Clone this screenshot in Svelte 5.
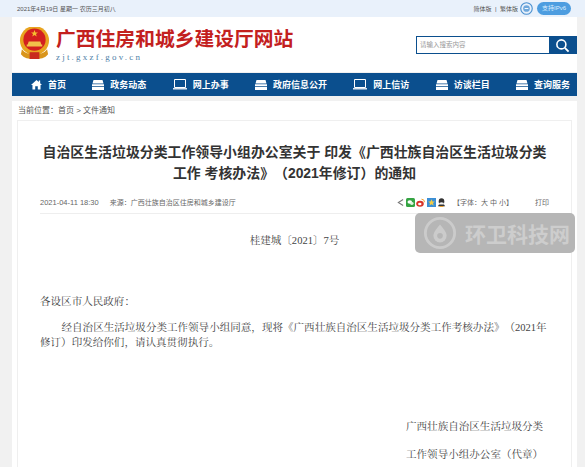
<script>
  const nav = [
    { t: '首页', i: 'home' }, { t: '政务动态', i: 'box' }, { t: '网上办事', i: 'pc' },
    { t: '政府信息公开', i: 'box' }, { t: '网上信访', i: 'pc' }, { t: '访谈栏目', i: 'box' }, { t: '查询服务', i: 'box' }
  ];
</script>

<div class="page">
  <div class="topbar">
    <div class="bar-in">
      <span class="date">2021年4月19日 星期一 农历三月初八</span>
      <span class="right">
        <span>简体版</span><span class="sep">|</span><span>繁体版</span>
        <svg class="care" viewBox="0 0 14 14" width="13" height="13"><circle cx="7" cy="7" r="6.2" fill="none" stroke="#4a90d0" stroke-width="1.2"/><circle cx="7" cy="7" r="3.6" fill="#6fa8dc"/><path d="M5 7h4" stroke="#fff"/></svg>
        <span class="ipv6">支持IPv6</span>
      </span>
    </div>
  </div>

  <div class="wrap">
    <header class="head">
      <div class="brand">
        <svg class="emblem" viewBox="0 0 32 34" width="31" height="33">
          <circle cx="16" cy="14" r="15" fill="#e8a420"/>
          <circle cx="16" cy="13" r="11.5" fill="#d3201f"/>
          <path d="M16 3l1 2.600h2.600l-2.100 1.600.8 2.600-2.300-1.600-2.300 1.600.8-2.600-2.100-1.600H15z" fill="#f5c030"/>
          <path d="M8 18h16v2H8zM10 15h12l1 3H9z" fill="#f2c14a"/>
          <path d="M3 23c3 4 7 5 13 5s10-1 13-5l1 5c-3 4-8 5-14 5S5 32 2 28z" fill="#d9951c"/>
          <rect x="11" y="26" width="10" height="7" fill="#c92a1e"/>
        </svg>
        <div>
          <div class="title">广西住房和城乡建设厅网站</div>
          <div class="domain">zjt.gxzf.gov.cn</div>
        </div>
      </div>
      <div class="search">
        <span class="ph">请输入搜索内容</span>
        <span class="btn"><svg viewBox="0 0 16 16" width="15" height="15"><circle cx="6.800" cy="6.800" r="4.800" fill="none" stroke="#fff" stroke-width="1.700"/><path d="M10.500 10.500l4 4" stroke="#fff" stroke-width="2"/></svg></span>
      </div>
    </header>

    <nav class="nav">
      {#each nav as n}
        <span class="nav-item">
          {#if n.i === 'home'}
            <svg viewBox="0 0 12 12" width="11" height="11"><path d="M6 1L0 6.500h1.600V11.500h3V8h2.800v3.500h3v-5H12L10 4.700V1.500H8.500v1.800z" fill="#fff"/></svg>
          {:else if n.i === 'box'}
            <svg viewBox="0 0 12 10" width="12" height="10"><path d="M1.500 0h9l1 3.500H.5zM0 4.300h12V6H0zM0 6.800h12V10H0z" fill="#fff"/></svg>
          {:else}
            <svg viewBox="0 0 14 11" width="14" height="11"><path d="M1.500.5h11v8h-11z" fill="none" stroke="#fff"/><path d="M0 9.800h14" stroke="#fff" stroke-width="1.300"/></svg>
          {/if}
          <b>{n.t}</b>
        </span>
      {/each}
    </nav>

    <div class="crumb">当前位置：首页 &gt; 文件通知</div>

    <div class="shell">
      <main class="article">
        <h1>自治区生活垃圾分类工作领导小组办公室关于 印发《广西壮族自治区生活垃圾分类<br />工作 考核办法》（2021年修订）的通知</h1>
        <div class="meta">
          <span class="m-left"><span class="time">2021-04-11 18:30</span><span>来源：广西壮族自治区住房和城乡建设厅</span></span>
          <span class="m-right">
            <span class="share">
              <svg viewBox="0 0 8 9" width="7" height="9"><path d="M7 1L1.500 4.500 7 8" fill="none" stroke="#777" stroke-width="1.200"/></svg>
              <svg viewBox="0 0 9 9" width="9" height="9"><rect width="9" height="9" rx="1.500" fill="#35a443"/><ellipse cx="3.800" cy="4" rx="2.300" ry="1.800" fill="#fff"/><ellipse cx="5.800" cy="5.500" rx="1.800" ry="1.400" fill="#dff3e0"/></svg>
              <svg viewBox="0 0 9 9" width="9" height="9"><ellipse cx="4" cy="5.800" rx="3.800" ry="3" fill="#d8352a"/><ellipse cx="3.800" cy="6" rx="1.700" ry="1.300" fill="#fff"/><path d="M5.500 1.200a3 3 0 0 1 3 3" fill="none" stroke="#f0a030"/></svg>
              <svg viewBox="0 0 9 9" width="9" height="9"><rect width="9" height="9" fill="#3b8fd6"/><path d="M4.500 1.200l1 2.200 2.300.2-1.800 1.500.6 2.400-2.100-1.300-2.100 1.300.6-2.400L1.200 3.600l2.300-.2z" fill="#f3cb45"/></svg>
              <svg viewBox="0 0 9 9" width="9" height="9"><ellipse cx="4.500" cy="3.500" rx="2.800" ry="3.300" fill="#333"/><ellipse cx="4.500" cy="6" rx="2.600" ry="1.800" fill="#f2f2f2"/><path d="M2 6.500L.8 8.200h7.400L7 6.500" fill="#333"/><path d="M2.500 8h4v1h-4z" fill="#e8a030"/></svg>
            </span>
            <span class="font">【字体：大 中 小】</span>
            <span class="print">打印</span>
          </span>
        </div>
        <div class="body">
          <p class="center">桂建城〔2021〕7号</p>
          <p class="addr">各设区市人民政府：</p>
          <p class="para">经自治区生活垃圾分类工作领导小组同意，现将《广西壮族自治区生活垃圾分类工作考核办法》（2021年修订）印发给你们，请认真贯彻执行。</p>
          <p class="sign s1">广西壮族自治区生活垃圾分类</p>
          <p class="sign s2">工作领导小组办公室（代章）</p>
        </div>
      </main>
      <div class="mark">
        <svg viewBox="0 0 36 36" width="34" height="34"><circle cx="18" cy="18" r="15.500" fill="none" stroke="#cbcbcb" stroke-width="3"/><path d="M18 9c5 6 7 9 7 12a7 7 0 0 1-14 0c0-3 2-6 7-12z" fill="#cbcbcb"/><circle cx="18" cy="21" r="3" fill="#b6b6b6"/></svg>
        <span>环卫科技网</span>
      </div>
    </div>
  </div>
</div>

<style>
  :global(body) { margin: 0; background: #f1f1f1; overflow: hidden; }
  .page { height: 467px; overflow: hidden; font-family: "Liberation Sans", "Noto Sans CJK SC", sans-serif; color: #333; text-spacing-trim: space-all; }
  .wrap { width: 565px; margin-left: 12px; }
  .topbar { height: 17px; background: #e9f1fb; }
  .bar-in { display: flex; justify-content: space-between; align-items: center; height: 17px; font-size: 6px; color: #555; margin-left: 17px; width: 554px; }
  .right { display: flex; align-items: center; gap: 3px; }
  .sep { margin: 0 .5px; }
  .care { margin-left: -1px; }
  .ipv6 { background: #4d9de0; color: #dfefff; border-radius: 7px; width: 34px; height: 13px; line-height: 13px; text-align: center; margin-left: 1px; }
  .head { height: 55px; background: #fff; display: flex; justify-content: space-between; align-items: flex-start; }
  .brand { display: flex; gap: 6px; padding: 10px 0 0 7px; }
  .title { font-size: 19.800px; line-height: 24px; font-weight: 700; color: #c3201e; white-space: nowrap; }
  .domain { font-family: "Liberation Serif", serif; font-size: 9px; letter-spacing: 2.200px; color: #4f7fa8; line-height: 11px; margin-top: 1px; }
  .search { display: flex; width: 161px; height: 18px; margin-top: 19px; border: 1px solid #0b4f8e; box-sizing: border-box; background: #fff; }
  .ph { flex: 1; font-size: 6.500px; color: #999; line-height: 16px; padding-left: 3px; }
  .btn { width: 27px; background: #0b4f8e; display: flex; align-items: center; justify-content: center; }
  .nav { height: 23px; margin-top: 1px; background: #0b4f8e; display: flex; justify-content: space-between; align-items: center; padding: 0 7px 0 19px; }
  .nav-item { display: flex; align-items: center; gap: 6px; color: #fff; font-size: 9px; white-space: nowrap; }
  .nav-item b { font-weight: 700; }
  .crumb { margin-top: 5px; height: 19px; background: #fff; font-size: 8px; line-height: 19px; color: #555; padding-left: 6px; box-sizing: border-box; }
  .shell { position: relative; background: #fff; height: 348px; padding: 0 5px; box-sizing: border-box; }
  .article { height: 348px; border: 1px solid #efefef; border-bottom: 0; padding: 21px 22px 0; box-sizing: border-box; }
  h1 { margin: 0; font-size: 13.900px; line-height: 21px; font-weight: 700; color: #333; text-align: center; white-space: nowrap; }
  .meta { margin-top: 12.500px; height: 17px; box-sizing: border-box; border-bottom: 1px solid #eee; display: flex; justify-content: space-between; font-size: 7px; color: #666; align-items: flex-start; line-height: 12px; }
  .time { font-size: 7.500px; }
  .m-left { display: flex; gap: 11px; }
  .m-right { display: flex; align-items: center; gap: 7px; }
  .share { display: flex; align-items: center; gap: 1.500px; }
  .print { margin-left: 15px; }
  .body { font-family: "Liberation Serif", "Noto Serif CJK SC", "Noto Sans CJK SC", serif; font-size: 10.550px; color: #444; line-height: 17px; }
  .body p { margin: 0; }
  .body .center { text-align: center; margin-top: 18.500px; }
  .body .addr { margin-top: 44px; }
  .body .para { margin-top: 11px; text-indent: 21.500px; line-height: 14.500px; }
  .body .sign { margin-left: 366px; white-space: nowrap; }
  .body .s1 { margin-top: 68px; }
  .body .s2 { margin-top: 11px; }
  .mark { position: absolute; left: 403px; top: 93px; width: 160px; height: 40px; background: #b6b6b6; border-radius: 5px; display: flex; align-items: center; gap: 8px; padding-left: 8px; box-sizing: border-box; color: #cdcdcd; font-size: 21px; font-weight: 700; white-space: nowrap; }
</style>
